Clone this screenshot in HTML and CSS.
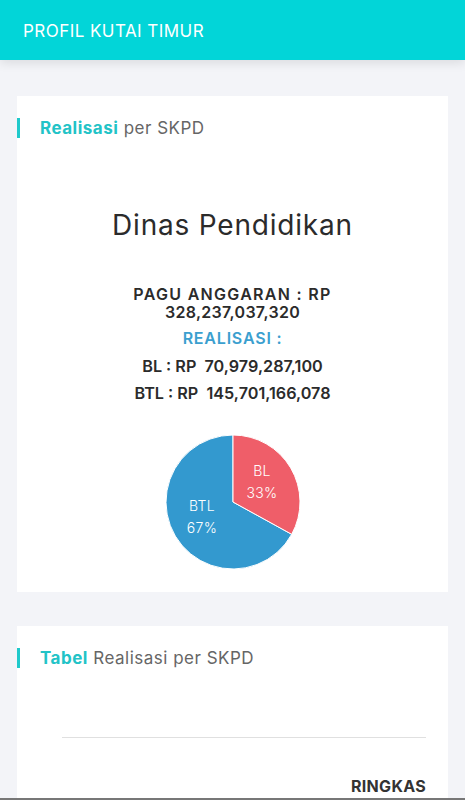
FILE: index.html
```html
<!DOCTYPE html>
<html lang="id">
<head>
<meta charset="utf-8">
<title>Profil Kutai Timur</title>
<link rel="stylesheet" href="styles.css">
</head>
<body>
<header class="topbar">
  <h1 class="topbar-title">PROFIL KUTAI TIMUR</h1>
</header>
<main class="content">
  <section class="card">
    <h2 class="card-heading"><span class="accent">Realisasi</span> per SKPD</h2>
    <div class="summary">
      <h3 class="agency">Dinas Pendidikan</h3>
      <p class="line pagu">PAGU ANGGARAN : RP<br><span class="pagu-num">328,237,037,320</span></p>
      <p class="line realisasi">REALISASI :</p>
      <p class="line amount">BL : RP&nbsp; 70,979,287,100</p>
      <p class="line amount">BTL : RP&nbsp; 145,701,166,078</p>
      <svg class="pie" width="138" height="138" viewBox="0 0 138 138">
        <path d="M69 69 L69 2 A67 67 0 1 0 127.7 101.3 Z" fill="#3399cf" stroke="#fff" stroke-width="1"/>
        <path d="M69 69 L69 2 A67 67 0 0 1 127.7 101.3 Z" fill="#ef5e69" stroke="#fff" stroke-width="1"/>
        <text x="98" y="43" class="pie-label">BL</text>
        <text x="98" y="65" class="pie-label">33%</text>
        <text x="38" y="78" class="pie-label">BTL</text>
        <text x="38" y="100" class="pie-label">67%</text>
      </svg>
    </div>
  </section>
  <section class="card card-table">
    <h2 class="card-heading"><span class="accent">Tabel</span> Realisasi per SKPD</h2>
    <div class="table-area">
      <div class="rule"></div>
      <div class="table-actions"><span class="ringkas">RINGKAS</span></div>
    </div>
  </section>
</main>
<div class="screen-edge"></div>
</body>
</html>
```
FILE: styles.css
```css
* { box-sizing: border-box; }
html, body { margin: 0; padding: 0; }
body {
  background: #f3f4f8;
  font-family: Inter, "DejaVu Sans", sans-serif;
  color: #333;
  width: 465px;
  height: 800px;
  overflow: hidden;
}
.topbar {
  height: 60px;
  background: #02d5d8;
  display: flex;
  align-items: center;
  padding-left: 23px;
  padding-top: 1px;
  box-shadow: 0 3px 10px rgba(0,0,0,0.10);
}
.topbar-title {
  margin: 0;
  font-size: 17px;
  font-weight: 400;
  color: #fff;
  letter-spacing: 0.45px;
}
.content {
  padding: 36px 17px 0 17px;
  display: flex;
  flex-direction: column;
  gap: 34px;
}
.card {
  background: #fff;
  padding-top: 22px;
}
.card-heading {
  margin: 0;
  border-left: 3px solid #1fc9cb;
  padding-left: 20px;
  height: 20px;
  line-height: 20px;
  font-size: 17px;
  font-weight: 400;
  color: #666;
  letter-spacing: 0.5px;
}
.accent {
  color: #22c3c7;
  font-weight: 700;
}
.summary {
  display: flex;
  flex-direction: column;
  align-items: center;
  text-align: center;
  padding-bottom: 21px;
}
.agency {
  margin: 70px 0 0 0;
  font-size: 28px;
  font-weight: 400;
  color: #2b2b2b;
  line-height: 34px;
  letter-spacing: 0.8px;
}
.line {
  margin: 0;
  font-size: 16px;
  font-weight: 600;
  color: #2b2b2b;
  line-height: 17px;
}
.pagu {
  margin-top: 44px;
  line-height: 17.5px;
  letter-spacing: 1.3px;
}
.pagu-num { letter-spacing: 0.3px; }
.realisasi {
  color: #3b9fcf;
  margin-top: 8.5px;
  letter-spacing: 0.8px;
}
.amount { font-size: 16.2px; margin-top: 10px; }
.realisasi + .amount { margin-top: 11px; }
.pie {
  margin-top: 31.5px;
  display: block;
}
.pie-label {
  fill: #fff;
  font-size: 14px;
  text-anchor: middle;
  font-family: Inter, sans-serif;
  font-weight: 300;
  letter-spacing: 0.3px;
}
.card-table { height: 200px; }
.table-area {
  padding: 69px 22px 0 45px;
}
.rule {
  height: 1px;
  background: #e0e0e0;
}
.table-actions {
  display: flex;
  justify-content: flex-end;
  margin-top: 39px;
}
.ringkas {
  font-size: 16px;
  font-weight: 700;
  color: #333;
  line-height: 18px;
  letter-spacing: 0.3px;
}
.screen-edge {
  position: fixed;
  left: 0;
  right: 0;
  bottom: 0;
  height: 2px;
  background: #777;
}
```
